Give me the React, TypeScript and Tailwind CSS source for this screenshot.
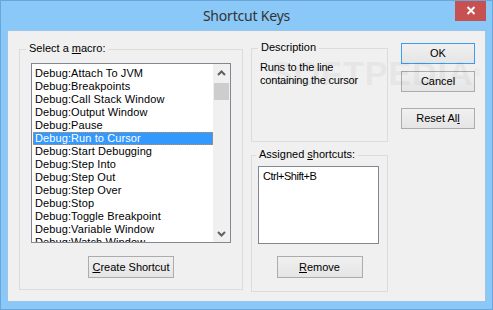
import React from "react";

const items = [
  "Debug:Attach To JVM",
  "Debug:Breakpoints",
  "Debug:Call Stack Window",
  "Debug:Output Window",
  "Debug:Pause",
  "Debug:Run to Cursor",
  "Debug:Start Debugging",
  "Debug:Step Into",
  "Debug:Step Out",
  "Debug:Step Over",
  "Debug:Stop",
  "Debug:Toggle Breakpoint",
  "Debug:Variable Window",
  "Debug:Watch Window",
];

function Btn({ children, className = "", def = false }: { children: React.ReactNode; className?: string; def?: boolean }) {
  return (
    <div
      className={
        "flex items-center justify-center bg-gradient-to-b from-[#f0f0f0] to-[#e5e5e5] border " +
        (def ? "border-[#3c9cf0]" : "border-[#acacac]") +
        " " +
        className
      }
    >
      {children}
    </div>
  );
}

export default function App() {
  const font = { fontFamily: '"Liberation Sans", Arial, sans-serif' };
  return (
    <div
      className="w-[493px] h-[310px] bg-[#8ac8f7] border border-[#6aa6dc] flex flex-col text-[11px] leading-[13px] text-black relative overflow-hidden"
      style={font}
    >
      {/* title bar */}
      <div className="h-[29px] flex items-start relative shrink-0">
        <div
          className="flex-1 text-center text-[14px] leading-[30px] tracking-[-0.2px] text-[#333]"
          style={{ fontFamily: '"Noto Sans", "Open Sans", sans-serif' }}
        >
          Shortcut Keys
        </div>
        <div className="absolute right-[6px] top-[-1px] w-[31px] h-[21px] bg-[#c75050] flex items-center justify-center">
          <svg width="10" height="9" viewBox="0 0 10 9">
            <path d="M1.5 1 L8.5 8 M8.5 1 L1.5 8" stroke="white" strokeWidth="2" />
          </svg>
        </div>
      </div>

      {/* client */}
      <div className="mx-[6px] h-[272px] border border-[#9cc4e8] bg-[#f0f0f0] flex relative">
        {/* left group */}
        <div className="ml-[11px] mt-[18px] w-[224px] h-[241px] border border-[#dcdcdc] relative flex flex-col items-center">
          <div className="absolute left-[6px] top-[-8px] px-[3px] bg-[#f0f0f0]">
            Select a <span className="underline">m</span>acro:
          </div>
          <div className="mt-[13px] w-[200px] h-[180px] border border-[#828790] bg-white flex overflow-hidden">
            <div className="flex-1 pt-[3px] pl-[1px] overflow-hidden">
              {items.map((it, i) => (
                <div
                  key={it}
                  className={
                    "h-[13px] pl-[2px] whitespace-nowrap tracking-[0.1px] " +
                    (i === 5 ? "bg-[#3399ff] text-white outline-1 outline-dotted outline-[#d98b3a] -outline-offset-1" : "")
                  }
                >
                  {it}
                </div>
              ))}
            </div>
            <div className="w-[17px] bg-[#f0f0f0] flex flex-col items-center shrink-0">
              <div className="h-[17px] w-full flex items-center justify-center">
                <svg width="9" height="6" viewBox="0 0 9 6">
                  <path d="M1 5 L4.5 1.5 L8 5" stroke="#606060" strokeWidth="2" fill="none" />
                </svg>
              </div>
              <div className="w-[15px] h-[17px] bg-[#cdcdcd] mt-[2px]" />
              <div className="flex-1" />
              <div className="h-[17px] w-full flex items-center justify-center">
                <svg width="9" height="6" viewBox="0 0 9 6">
                  <path d="M1 1 L4.5 4.5 L8 1" stroke="#606060" strokeWidth="2" fill="none" />
                </svg>
              </div>
            </div>
          </div>
          <Btn className="mt-[13px] w-[86px] h-[22px]">
            <span>
              <span className="underline">C</span>reate Shortcut
            </span>
          </Btn>
        </div>

        {/* middle column */}
        <div className="ml-[8px] mt-[17px] flex flex-col w-[137px]">
          <div className="h-[94px] border border-[#dcdcdc] relative px-[8px] pt-[12px] tracking-[-0.2px]">
            <div className="absolute left-[6px] top-[-8px] px-[3px] bg-[#f0f0f0] tracking-normal">Description</div>
            <div>Runs to the line</div>
            <div>containing the cursor</div>
          </div>
          <div className="mt-[13px] h-[137px] border border-[#dcdcdc] relative flex flex-col items-center">
            <div className="absolute left-[4px] top-[-8px] px-[3px] bg-[#f0f0f0]">
              Assigned <span className="underline">s</span>hortcuts:
            </div>
            <div className="mt-[10px] ml-[-2px] w-[121px] h-[78px] border border-[#828790] bg-white pl-[4px] pt-[3px] tracking-[-0.5px]">
              Ctrl+Shift+B
            </div>
            <Btn className="mt-[12px] w-[86px] h-[22px]">
              <span>
                <span className="underline">R</span>emove
              </span>
            </Btn>
          </div>
        </div>

        {/* buttons */}
        <div className="ml-[13px] mt-[12px] flex flex-col w-[74px]">
          <Btn def className="h-[21px]">OK</Btn>
          <Btn className="h-[21px] mt-[7px]">Cancel</Btn>
          <Btn className="h-[21px] mt-[16px]">
            <span>
              Reset Al<span className="underline">l</span>
            </span>
          </Btn>
        </div>

        {/* watermark */}
        <div
          className="absolute left-[262px] top-[22px] text-[34px] leading-[40px] font-bold tracking-[1px] text-[#000] opacity-[0.035] pointer-events-none select-none"
          style={{ fontFamily: '"Liberation Sans", Arial, sans-serif' }}
        >
          SOFTPEDIA<span className="text-[10px] align-top">®</span>
        </div>
      </div>
    </div>
  );
}
